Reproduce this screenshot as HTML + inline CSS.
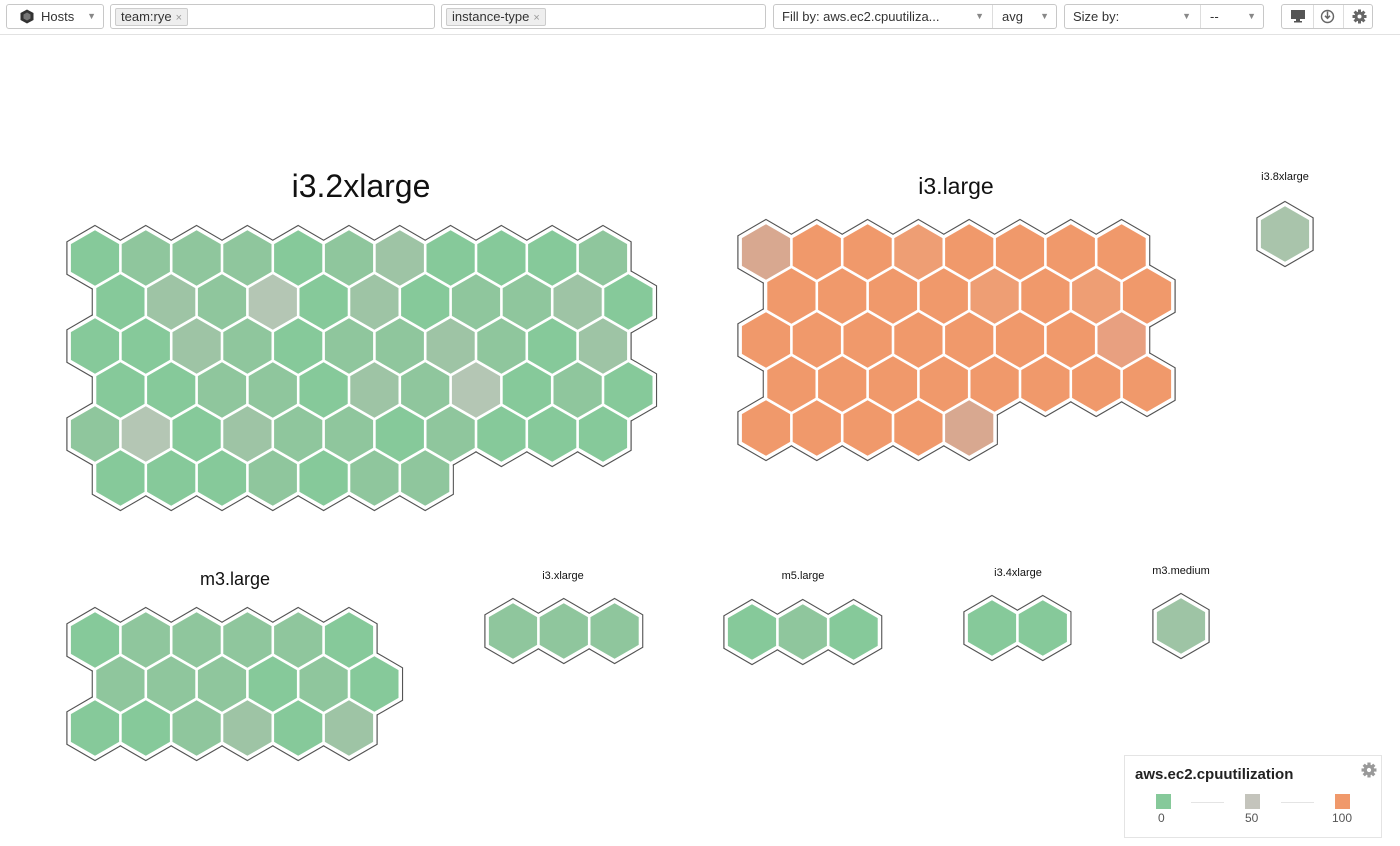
<!DOCTYPE html>
<html><head><meta charset="utf-8"><style>
*{box-sizing:border-box}
body{margin:0;width:1400px;height:846px;background:#fff;font-family:"Liberation Sans",sans-serif;overflow:hidden;position:relative}
.bar{position:absolute;left:0;top:0;width:1400px;height:35px;border-bottom:1px solid #e2e2e2;background:#fff}
.b{position:absolute;top:4px;height:25px;border:1px solid #c8c8c8;border-radius:3px;background:#fff;font-size:13px;color:#333;line-height:23px;padding-left:8px}
.tag{position:absolute;top:3px;left:4px;height:18px;line-height:16px;border:1px solid #ccc;border-radius:2px;background:#eee;padding:0 5px;font-size:13px}
.tag i{font-style:normal;color:#999;font-size:11px;margin-left:4px}
.ar{position:absolute;right:7px;top:0;font-size:9px;color:#888}
.sep{position:absolute;top:0;bottom:0;width:1px;background:#ddd}
.lbl{position:absolute;transform:translateX(-50%);color:#111;white-space:nowrap}
</style></head><body>
<div class="bar">
 <div class="b" style="left:6px;width:98px;padding-left:34px"><svg style="position:absolute;left:13px;top:4px" width="14" height="15" viewBox="0 0 14 15"><polygon points="7,0.5 13.5,4 13.5,11 7,14.5 0.5,11 0.5,4" fill="#333"/><polygon points="7,3.5 10.5,5.5 10.5,9.5 7,11.5 3.5,9.5 3.5,5.5" fill="#777"/></svg>Hosts<span class="ar">▼</span></div>
 <div class="b" style="left:110px;width:325px"><span class="tag">team:rye<i>×</i></span></div>
 <div class="b" style="left:441px;width:325px"><span class="tag">instance-type<i>×</i></span></div>
 <div class="b" style="left:773px;width:284px">Fill by: aws.ec2.cpuutiliza...<span class="ar" style="right:72px">▼</span><span class="sep" style="left:218px"></span><span style="position:absolute;left:228px">avg</span><span class="ar">▼</span></div>
 <div class="b" style="left:1064px;width:200px">Size by:<span class="ar" style="right:72px">▼</span><span class="sep" style="left:135px"></span><span style="position:absolute;left:145px">--</span><span class="ar">▼</span></div>
 <div class="b" style="left:1281px;width:92px;padding:0">
  <svg style="position:absolute;left:8px;top:4px" width="16" height="14" viewBox="0 0 16 14"><rect x="1" y="1" width="14" height="9" fill="#555"/><rect x="6" y="10" width="4" height="2" fill="#555"/><rect x="4" y="12" width="8" height="1.5" fill="#555"/></svg>
  <span class="sep" style="left:31px"></span>
  <svg style="position:absolute;left:38px;top:4px" width="15" height="15" viewBox="0 0 15 15"><circle cx="7.5" cy="7.5" r="6" fill="none" stroke="#666" stroke-width="1.4"/><path d="M7.5 2.5V9M5 6.8l2.5 2.5 2.5-2.5" fill="none" stroke="#666" stroke-width="1.5"/></svg>
  <span class="sep" style="left:61px"></span>
  <svg style="position:absolute;left:70px;top:4px" width="15" height="15" viewBox="0 0 15 15"><g fill="#666"><circle cx="7.5" cy="7.5" r="5"/><rect x="6" y="0.5" width="3" height="14"/><rect x="0.5" y="6" width="14" height="3"/><rect x="6" y="0.5" width="3" height="14" transform="rotate(45 7.5 7.5)"/><rect x="6" y="0.5" width="3" height="14" transform="rotate(-45 7.5 7.5)"/></g><circle cx="7.5" cy="7.5" r="2" fill="#fff"/></svg>
 </div>
</div>

<div class="lbl" style="left:361px;top:168px;font-size:32px">i3.2xlarge</div>
<div class="lbl" style="left:956px;top:173px;font-size:23px">i3.large</div>
<div class="lbl" style="left:1285px;top:171px;font-size:11px">i3.8xlarge</div>
<div class="lbl" style="left:235px;top:569px;font-size:18px">m3.large</div>
<div class="lbl" style="left:563px;top:570px;font-size:11px">i3.xlarge</div>
<div class="lbl" style="left:803px;top:570px;font-size:11px">m5.large</div>
<div class="lbl" style="left:1018px;top:567px;font-size:11px">i3.4xlarge</div>
<div class="lbl" style="left:1181px;top:565px;font-size:11px">m3.medium</div>

<svg id="s" style="position:absolute;left:0;top:0" width="1400" height="846"></svg>

<div style="position:absolute;left:1124px;top:755px;width:258px;height:83px;border:1px solid #e4e4e4;background:#fff">
 <div style="position:absolute;left:10px;top:10px;font-size:15px;font-weight:bold;color:#222">aws.ec2.cpuutilization</div>
 <svg style="position:absolute;left:236px;top:6px" width="16" height="16" viewBox="0 0 15 15"><g fill="#999"><circle cx="7.5" cy="7.5" r="5"/><rect x="6" y="0.5" width="3" height="14"/><rect x="0.5" y="6" width="14" height="3"/><rect x="6" y="0.5" width="3" height="14" transform="rotate(45 7.5 7.5)"/><rect x="6" y="0.5" width="3" height="14" transform="rotate(-45 7.5 7.5)"/></g><circle cx="7.5" cy="7.5" r="2" fill="#fff"/></svg>
 <div style="position:absolute;left:31px;top:38px;width:15px;height:15px;background:#86c99a"></div>
 <div style="position:absolute;left:120px;top:38px;width:15px;height:15px;background:#c4c4bc"></div>
 <div style="position:absolute;left:210px;top:38px;width:15px;height:15px;background:#f0996b"></div>
 <div style="position:absolute;left:66px;top:46px;width:33px;height:1px;background:#e4e4e4"></div>
 <div style="position:absolute;left:156px;top:46px;width:33px;height:1px;background:#e4e4e4"></div>
 <div style="position:absolute;left:33px;top:55px;font-size:12px;color:#555">0</div>
 <div style="position:absolute;left:120px;top:55px;font-size:12px;color:#555">50</div>
 <div style="position:absolute;left:207px;top:55px;font-size:12px;color:#555">100</div>
</div>

<script>
var G='#86c99a',g='#8fc69d',L='#9ec4a5',P='#b4c6b4',O='#f0996b',o='#ee9e74',B='#d8a890',Q='#e8a080';
var groups=[
 {x0:95,y0:258,rows:[[0,[G,g,g,g,G,g,L,G,G,G,g]],[1,[G,L,g,P,G,L,G,g,g,L,G]],[0,[G,G,L,g,G,g,g,L,g,G,L]],[1,[G,G,g,g,G,L,g,P,G,g,G]],[0,[g,P,G,L,g,g,G,g,G,G,G]],[1,[G,G,G,g,G,g,g]]]},
 {x0:766,y0:252,rows:[[0,[B,O,O,o,O,O,O,O]],[1,[O,O,O,O,o,O,o,O]],[0,[O,O,O,O,O,O,O,Q]],[1,[O,O,O,O,O,O,O,O]],[0,[O,O,O,O,B]]]},
 {x0:1285,y0:234,rows:[[0,['#a9c4ab']]]},
 {x0:95,y0:640,rows:[[0,[G,g,g,g,g,G]],[1,[g,g,g,G,g,G]],[0,[G,G,g,L,G,L]]]},
 {x0:513,y0:631,rows:[[0,[g,g,g]]]},
 {x0:752,y0:632,rows:[[0,[G,g,G]]]},
 {x0:992,y0:628,rows:[[0,[G,G]]]},
 {x0:1181,y0:626,rows:[[0,[L]]]}
];
var dx=50.8,dy=44;
function poly(cx,cy,r){var p=[];for(var i=0;i<6;i++){var a=Math.PI/3*i-Math.PI/2;p.push((cx+r*Math.cos(a)).toFixed(1)+','+(cy+r*Math.sin(a)).toFixed(1));}return p.join(' ');}
var l1='',l2='',l3='';
groups.forEach(function(gr){gr.rows.forEach(function(row,ri){row[1].forEach(function(c,i){
 var cx=gr.x0+row[0]*dx/2+i*dx, cy=gr.y0+ri*dy;
 l1+='<polygon points="'+poly(cx,cy,32.5)+'" fill="none" stroke="#555" stroke-width="1.2"/>';
 l2+='<polygon points="'+poly(cx,cy,31.8)+'" fill="#fff"/>';
 l3+='<polygon points="'+poly(cx,cy,27.8)+'" fill="'+c+'"/>';
});});});
document.getElementById('s').innerHTML=l1+l2+l3;
</script>
</body></html>
